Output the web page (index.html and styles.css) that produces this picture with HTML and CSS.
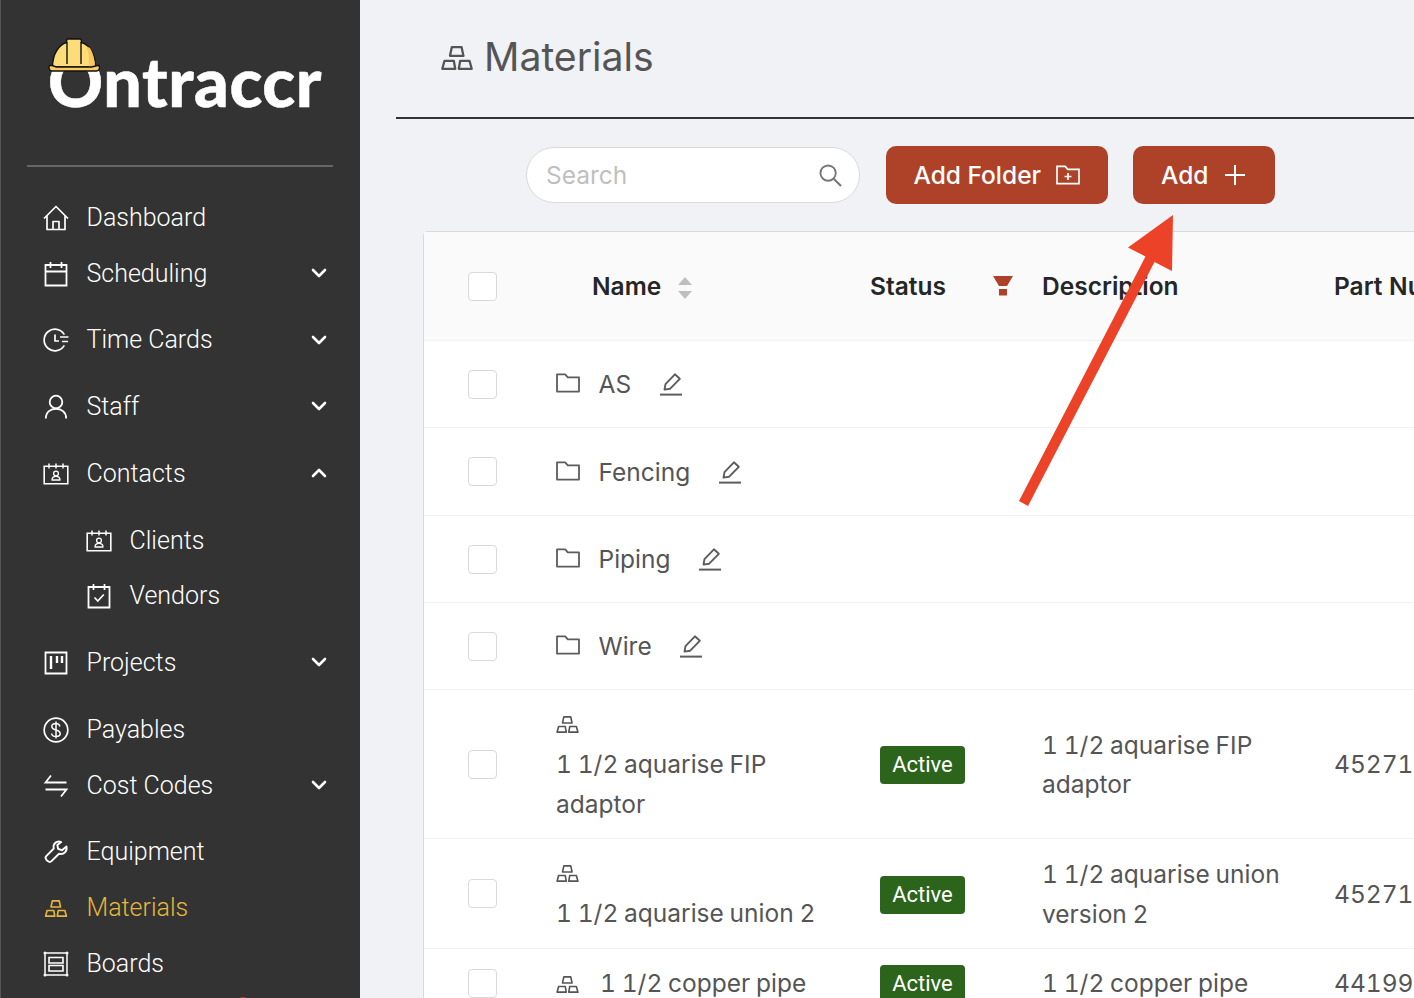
FILE: index.html
```html
<!DOCTYPE html>
<html lang="en">
<head>
<meta charset="utf-8">
<title>Materials</title>
<link rel="stylesheet" href="styles.css">
</head>
<body>
<svg class="defs" width="0" height="0" aria-hidden="true">
  <symbol id="i-bars" viewBox="0 0 32 24">
    <path d="M10.800 1.200h9.800l1.800 8.600H9zM3.500 14.800h9.300l1.400 8H1.300zM19.200 14.800h9.300l2.200 8H17.800z" fill="none" stroke="currentColor" stroke-width="2.300" stroke-linejoin="round"/>
  </symbol>
  <symbol id="i-folder" viewBox="0 0 24 20">
    <path d="M1 18.600V1.400h8.200l2.600 3h11.200v14.200z" fill="none" stroke="currentColor" stroke-width="1.800" stroke-linejoin="round"/>
  </symbol>
  <symbol id="i-edit" viewBox="0 0 24 24">
    <path d="M5.500 17.600l1-5.400L15.900 2.300l4.900 4.500-9.600 9.900z" fill="none" stroke="currentColor" stroke-width="1.900" stroke-linejoin="round"/>
    <path d="M1 22.600h22" stroke="currentColor" stroke-width="2"/>
  </symbol>
  <symbol id="i-contact" viewBox="0 0 26 22">
    <path d="M1.200 3.200h23.600v17.600H1.200z" fill="none" stroke="currentColor" stroke-width="1.600"/>
    <path d="M6 .5v5M13 .5v5M20 .5v5" stroke="currentColor" stroke-width="1.500"/>
    <circle cx="13" cy="10.500" r="2.400" fill="none" stroke="currentColor" stroke-width="1.300"/>
    <path d="M9 16.500c.4-4.200 7.600-4.200 8 0M8.500 17h9" fill="none" stroke="currentColor" stroke-width="1.300"/>
  </symbol>
  <symbol id="i-chev" viewBox="0 0 16 12">
    <path d="M2 3l6 6 6-6" fill="none" stroke="currentColor" stroke-width="2.600" stroke-linecap="round" stroke-linejoin="round"/>
  </symbol>
</svg>

<div class="page">
  <aside class="sidebar">
    <div class="logo">
      <span class="logo-text">Ontraccr</span>
      <svg class="helmet" viewBox="0 0 52 36" aria-hidden="true">
        <path d="M4.500 29C4.500 16 11 6.500 18.500 4.500L18.800 1.800Q19 1 20 1H32Q33 1 33.200 1.800L33.500 4.500C41 6.500 47.500 16 47.500 29z" fill="#fddc7a" stroke="#111" stroke-width="1.400"/>
        <path d="M42 10C45 15 47 22 47 29h-6C41 21 41 15 38 8z" fill="#f9c85a"/>
        <path d="M19 4v22M33 4v22" stroke="#111" stroke-width="1.400"/>
        <path d="M2.500 27.500H4l4.500 1.500h35L49.500 27.500h.5c1 0 1.500.5 1.500 2s-1 3.500-3 3.500H4c-2 0-3-2-3-3.500s.5-2 1-2z" fill="#fbcb5e" stroke="#111" stroke-width="1.400" stroke-linejoin="round"/>
      </svg>
    </div>
    <hr class="side-rule">
    <nav class="nav">
      <a class="item">
        <svg class="ic" viewBox="0 0 26 26"><path d="M1 13.500L13 1.500l12 12M4 11v13.500h18V11M10 24.500v-8h6v8" fill="none" stroke="currentColor" stroke-width="1.700" stroke-linejoin="round"/></svg>
        <span>Dashboard</span>
      </a>
      <a class="item has-sub">
        <svg class="ic" viewBox="0 0 26 26"><path d="M2.500 4h21v20.500h-21zM2.500 10.500h21M7.500 1v6M18.500 1v6" fill="none" stroke="currentColor" stroke-width="1.800"/></svg>
        <span>Scheduling</span>
        <svg class="chev"><use href="#i-chev"/></svg>
      </a>
      <a class="item has-sub">
        <svg class="ic" viewBox="0 0 26 26"><path d="M21.300 7.600A10.800 10.800 0 1 0 21.300 18.400M12 7.500V14h4M17 10h8.500M19 14.500h6" fill="none" stroke="currentColor" stroke-width="1.700"/></svg>
        <span>Time Cards</span>
        <svg class="chev"><use href="#i-chev"/></svg>
      </a>
      <a class="item has-sub">
        <svg class="ic" viewBox="0 0 26 26"><circle cx="13" cy="8" r="6.300" fill="none" stroke="currentColor" stroke-width="1.800"/><path d="M2.800 24.500c0-13 20.400-13 20.400 0" fill="none" stroke="currentColor" stroke-width="1.800"/></svg>
        <span>Staff</span>
        <svg class="chev"><use href="#i-chev"/></svg>
      </a>
      <a class="item has-sub">
        <svg class="ic ic-wide"><use href="#i-contact"/></svg>
        <span>Contacts</span>
        <svg class="chev chev-up"><use href="#i-chev"/></svg>
      </a>
      <a class="item sub">
        <svg class="ic ic-wide"><use href="#i-contact"/></svg>
        <span>Clients</span>
      </a>
      <a class="item sub has-sub">
        <svg class="ic" viewBox="0 0 26 26"><path d="M2.500 4h21v20.500h-21z" fill="none" stroke="currentColor" stroke-width="1.800"/><path d="M7.500 1v6M18.500 1v6" stroke="currentColor" stroke-width="1.700"/><path d="M8.500 14.500l3.300 3.500 6-6.500" fill="none" stroke="currentColor" stroke-width="1.700"/></svg>
        <span>Vendors</span>
      </a>
      <a class="item has-sub">
        <svg class="ic" viewBox="0 0 26 26"><path d="M2.500 2.500h21v21h-21z" fill="none" stroke="currentColor" stroke-width="1.800"/><path d="M8 6v13M14 6v7M19 6v7" stroke="currentColor" stroke-width="2.400"/></svg>
        <span>Projects</span>
        <svg class="chev"><use href="#i-chev"/></svg>
      </a>
      <a class="item">
        <svg class="ic" viewBox="0 0 26 26"><circle cx="13" cy="13" r="11.800" fill="none" stroke="currentColor" stroke-width="1.700"/><path d="M16.800 9.500c-.5-4-7.800-4-8 0 0 4.500 8.400 2.500 8.400 7 0 4-8.200 4-8.600 0M13 4.500v17" fill="none" stroke="currentColor" stroke-width="1.500"/></svg>
        <span>Payables</span>
      </a>
      <a class="item has-sub">
        <svg class="ic" viewBox="0 0 26 26"><path d="M8 2.500L2.500 9.500H23.500M18 23.500L23.500 16.500H2.500" fill="none" stroke="currentColor" stroke-width="1.800"/></svg>
        <span>Cost Codes</span>
        <svg class="chev"><use href="#i-chev"/></svg>
      </a>
      <a class="item">
        <svg class="ic" viewBox="-2 -2 30 30"><path d="M25 6.500l-5 4.500-4.500-1.500-1-4.500L19 1.500c-5-2-10 2-8.500 7.500L2 17.500c-1.500 1.500-1.500 3 0 4.500l1.500 1.500c1.500 1.200 3 1.200 4.300 0l8.700-8.500C22 16.500 26.500 12 25 6.500z" fill="none" stroke="currentColor" stroke-width="2.200" stroke-linejoin="round"/></svg>
        <span>Equipment</span>
      </a>
      <a class="item active">
        <svg class="ic ic-bars"><use href="#i-bars"/></svg>
        <span>Materials</span>
      </a>
      <a class="item">
        <svg class="ic" viewBox="0 0 26 26"><path d="M2 2h22v22H2z" fill="none" stroke="currentColor" stroke-width="1.500"/><path d="M6 6.500h14v5.500H6zM6 14.500h14V20H6z" fill="none" stroke="currentColor" stroke-width="1.600"/><g fill="currentColor"><circle cx="2" cy="2" r="1.500"/><circle cx="24" cy="2" r="1.500"/><circle cx="2" cy="24" r="1.500"/><circle cx="24" cy="24" r="1.500"/></g></svg>
        <span>Boards</span>
      </a>
    </nav>
    <i class="peek"></i>
  </aside>

  <main class="main">
    <header class="head">
      <svg class="head-ic"><use href="#i-bars"/></svg>
      <h1>Materials</h1>
    </header>

    <div class="tools">
      <div class="search">
        <span class="placeholder">Search</span>
        <svg class="search-ic" viewBox="0 0 24 24"><circle cx="9.500" cy="9.500" r="8" fill="none" stroke="currentColor" stroke-width="2"/><path d="M15.300 15.300L23 23" stroke="currentColor" stroke-width="2.200"/></svg>
      </div>
      <button class="btn btn-folder">Add Folder
        <svg class="btn-ic" viewBox="0 0 24 20"><path d="M1 18.600V1.400h8.200l2.600 3h11.200v14.200z" fill="none" stroke="currentColor" stroke-width="1.700"/><path d="M8.500 11.500h7M12 8v7" stroke="currentColor" stroke-width="1.700"/></svg>
      </button>
      <button class="btn btn-add">Add
        <svg class="plus-ic" viewBox="0 0 20 20"><path d="M0 10h20M10 0v20" stroke="currentColor" stroke-width="2"/></svg>
      </button>
    </div>

    <section class="table">
      <div class="row head-row">
        <div class="c-check"><i class="box"></i></div>
        <div class="c-name th"><span>Name</span>
          <svg class="sort" viewBox="0 0 14 22"><path d="M7 0l7 8H0zM7 22l7-8H0z" fill="#bfbfbf"/></svg>
        </div>
        <div class="c-status th"><span>Status</span>
          <svg class="funnel" viewBox="0 0 20 20"><path d="M0 0h20l-6 10H6zM6 13h8v6.500H6z" fill="#ae4229"/></svg>
        </div>
        <div class="c-desc th">Description</div>
        <div class="c-part th">Part Number</div>
      </div>

      <div class="row folder-row">
        <div class="c-check"><i class="box"></i></div>
        <div class="c-name folder"><svg class="fold-ic"><use href="#i-folder"/></svg><span>AS</span><svg class="edit-ic"><use href="#i-edit"/></svg></div>
      </div>
      <div class="row folder-row tall">
        <div class="c-check"><i class="box"></i></div>
        <div class="c-name folder"><svg class="fold-ic"><use href="#i-folder"/></svg><span>Fencing</span><svg class="edit-ic"><use href="#i-edit"/></svg></div>
      </div>
      <div class="row folder-row">
        <div class="c-check"><i class="box"></i></div>
        <div class="c-name folder"><svg class="fold-ic"><use href="#i-folder"/></svg><span>Piping</span><svg class="edit-ic"><use href="#i-edit"/></svg></div>
      </div>
      <div class="row folder-row">
        <div class="c-check"><i class="box"></i></div>
        <div class="c-name folder"><svg class="fold-ic"><use href="#i-folder"/></svg><span>Wire</span><svg class="edit-ic"><use href="#i-edit"/></svg></div>
      </div>

      <div class="row item-row r-149">
        <div class="c-check"><i class="box"></i></div>
        <div class="c-name"><svg class="bar-ic"><use href="#i-bars"/></svg><span class="nm">1 1/2 aquarise FIP adaptor</span></div>
        <div class="c-status"><b class="tag">Active</b></div>
        <div class="c-desc">1 1/2 aquarise FIP adaptor</div>
        <div class="c-part">45271</div>
      </div>
      <div class="row item-row r-110">
        <div class="c-check"><i class="box"></i></div>
        <div class="c-name"><svg class="bar-ic"><use href="#i-bars"/></svg><span class="nm">1 1/2 aquarise union 2</span></div>
        <div class="c-status"><b class="tag">Active</b></div>
        <div class="c-desc">1 1/2 aquarise union version 2</div>
        <div class="c-part">452716</div>
      </div>
      <div class="row item-row r-last">
        <div class="c-check"><i class="box"></i></div>
        <div class="c-name inline"><svg class="bar-ic"><use href="#i-bars"/></svg><span>1 1/2 copper pipe</span></div>
        <div class="c-status"><b class="tag">Active</b></div>
        <div class="c-desc">1 1/2 copper pipe</div>
        <div class="c-part">44199</div>
      </div>
    </section>
  </main>

  <svg class="arrow" viewBox="0 0 1414 998" aria-hidden="true">
    <path d="M1173 215L1128 247.500 1145.500 256.500 1019 501 1028 506 1154.500 262 1172 271z" fill="#ec4227"/>
  </svg>
</div>
</body>
</html>
```
FILE: styles.css
```css
* { box-sizing: border-box; }
html, body { margin: 0; height: 100%; overflow: hidden; }
body { font-family: "Inter", "Liberation Sans", sans-serif; background: #f0f2f5; }
.defs { position: absolute; }

.page { position: relative; display: flex; width: 1414px; height: 998px; overflow: hidden; }

/* sidebar */
.sidebar { position: relative; flex: 0 0 360px; height: 998px; overflow: hidden; background: #333333; border-left: 1px solid #555; color: #fff; font-family: "Roboto", "Liberation Sans", sans-serif; }
.logo { position: relative; height: 165px; }
.logo-text { position: absolute; left: 47px; top: 41px; font-family: "Lato", "DejaVu Sans", sans-serif; font-weight: 900; font-size: 68px; line-height: 80px; letter-spacing: .6px; color: #fff; -webkit-text-stroke: .5px #fff; }
.helmet { position: absolute; left: 47px; top: 38px; width: 52px; height: 36px; }
.side-rule { height: 2px; margin: 0 27px 0 26px; border: 0; background: #666; }
.nav { display: flex; flex-direction: column; margin-top: 23px; }
.item { position: relative; display: flex; align-items: center; gap: 17.500px; height: 55.750px; padding-left: 42px; font-size: 25px; font-weight: 300; line-height: 56px; color: #fff; }
.has-sub { margin-bottom: 11px; }
.sub { padding-left: 85px; }
.active { color: #e5b73c; }
.ic { flex: 0 0 26px; width: 26px; height: 26px; }
.ic-wide { height: 22px; }
.ic-bars { height: 17px; }
.chev { position: absolute; left: 309.500px; top: 21.200px; width: 16px; height: 12px; }
.chev-up { transform: rotate(180deg); }
.peek { position: absolute; left: 235px; top: 997px; width: 14px; height: 14px; border-radius: 50%; background: #ae4229; }

/* main */
.main { flex: 1 1 auto; min-width: 0; }
.head { display: flex; align-items: center; gap: 11px; height: 119px; margin-left: 36px; padding: 0 0 4px 45px; border-bottom: 2px solid #333; color: #555; }
.head-ic { flex: 0 0 32px; width: 32px; height: 24px; margin-top: 2px; }
.head h1 { margin: 0; font-size: 39.200px; font-weight: 400; line-height: 48px; }

.tools { display: flex; align-items: center; height: 112px; padding-left: 166px; }
.search { display: flex; align-items: center; justify-content: space-between; width: 334px; height: 56px; margin-right: 26px; padding: 0 17px 0 19px; background: #fff; border: 1px solid #d9d9d9; border-radius: 28px; }
.placeholder { font-size: 24.500px; color: #bfbfbf; }
.search-ic { width: 23px; height: 23px; color: #777; }
.btn { display: flex; align-items: center; height: 58px; padding: 0; border: 0; border-radius: 10px; background: #ae4229; color: #fff; font-family: inherit; font-size: 24.500px; font-weight: 500; }
.btn-folder { width: 222px; padding-left: 27.500px; margin-right: 25px; }
.btn-add { width: 142px; padding-left: 28px; }
.btn-ic { width: 24px; height: 20px; margin-left: 15px; }
.plus-ic { width: 20px; height: 20px; margin-left: 17px; }

/* table */
.table { width: 1100px; margin-left: 63px; background: #fff; border: 1px solid #d9d9d9; border-width: 1px 0 0 1px; border-top-left-radius: 5px; color: #555; font-size: 24.500px; line-height: 39.500px; font-variant-numeric: tabular-nums; word-spacing: -.8px; }
.row { display: grid; grid-template-columns: 132px 314px 172px 292px 1fr; align-items: center; border-bottom: 1px solid #f0f0f0; }
.c-name, .c-status, .c-desc, .c-part { padding-top: 2px; }
.head-row { height: 109px; background: #fafafa; color: #262626; font-weight: 600; }
.folder-row { height: 87px; }
.tall { height: 88px; }
.r-149 { height: 149px; }
.r-110 { height: 110px; }
.r-last { height: 69px; }
.box { display: block; width: 29px; height: 29px; margin-left: 44px; background: #fff; border: 1px solid #d9d9d9; border-radius: 4px; }
.th { display: flex; align-items: center; white-space: nowrap; word-spacing: 0; }
.c-name.th { padding-left: 36px; }
.sort { width: 14px; height: 22px; margin: 2px 0 0 17px; }
.funnel { width: 20px; height: 20px; margin: 0 0 2px 47px; }
.folder { display: flex; align-items: center; white-space: nowrap; }
.fold-ic { width: 24px; height: 20px; margin: 0 18.500px 4px 0; color: #5c5c5c; }
.edit-ic { width: 24px; height: 24px; margin: 0 0 2px 27.500px; color: #5c5c5c; }
.bar-ic { display: block; width: 23px; height: 17px; margin: 10px 0 12px; color: #555; }
.nm { display: block; max-width: 274px; }
.inline { display: flex; align-items: center; gap: 21px; white-space: nowrap; }
.inline .bar-ic { margin: 0; }
.tag { display: block; margin-left: 10px; width: 85px; height: 38px; border-radius: 4px; background: #2c641b; color: #fff; font-family: "Roboto", "Liberation Sans", sans-serif; font-size: 22px; font-weight: 400; line-height: 38px; text-align: center; }
.c-part { white-space: nowrap; }

.arrow { position: absolute; left: 0; top: 0; width: 1414px; height: 998px; pointer-events: none; }
```
